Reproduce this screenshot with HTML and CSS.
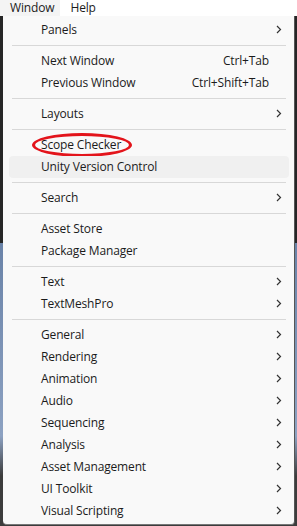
FILE: index.html
```html
<!DOCTYPE html>
<html lang="en">
<head>
    <meta charset="UTF-8">
    <meta name="viewport" content="width=device-width, initial-scale=1.0">
    <title>Window Menu</title>
    <link rel="stylesheet" href="styles.css">
</head>
<body>
    <div class="menubar">
        <span class="mb-item active">Window</span>
        <span class="mb-item">Help</span>
    </div>

    <div class="desk">
        <div class="menu">
            <div class="item"><span class="label">Panels</span><span class="arrow"><svg width="6" height="9" viewBox="0 0 6 9"><polyline points="1,1 4.5,4.5 1,8"/></svg></span></div>
            <div class="sep"></div>
            <div class="item"><span class="label">Next Window</span><span class="key">Ctrl+Tab</span><span class="arrow"></span></div>
            <div class="item"><span class="label">Previous Window</span><span class="key">Ctrl+Shift+Tab</span><span class="arrow"></span></div>
            <div class="sep"></div>
            <div class="item"><span class="label">Layouts</span><span class="arrow"><svg width="6" height="9" viewBox="0 0 6 9"><polyline points="1,1 4.5,4.5 1,8"/></svg></span></div>
            <div class="sep"></div>
            <div class="item"><span class="label">Scope Checker</span><span class="arrow"></span><span class="circled"></span></div>
            <div class="item hover"><span class="label">Unity Version Control</span><span class="arrow"></span></div>
            <div class="sep"></div>
            <div class="item"><span class="label">Search</span><span class="arrow"><svg width="6" height="9" viewBox="0 0 6 9"><polyline points="1,1 4.5,4.5 1,8"/></svg></span></div>
            <div class="sep"></div>
            <div class="item"><span class="label">Asset Store</span><span class="arrow"></span></div>
            <div class="item"><span class="label">Package Manager</span><span class="arrow"></span></div>
            <div class="sep"></div>
            <div class="item"><span class="label">Text</span><span class="arrow"><svg width="6" height="9" viewBox="0 0 6 9"><polyline points="1,1 4.5,4.5 1,8"/></svg></span></div>
            <div class="item"><span class="label">TextMeshPro</span><span class="arrow"><svg width="6" height="9" viewBox="0 0 6 9"><polyline points="1,1 4.5,4.5 1,8"/></svg></span></div>
            <div class="sep"></div>
            <div class="item"><span class="label">General</span><span class="arrow"><svg width="6" height="9" viewBox="0 0 6 9"><polyline points="1,1 4.5,4.5 1,8"/></svg></span></div>
            <div class="item"><span class="label">Rendering</span><span class="arrow"><svg width="6" height="9" viewBox="0 0 6 9"><polyline points="1,1 4.5,4.5 1,8"/></svg></span></div>
            <div class="item"><span class="label">Animation</span><span class="arrow"><svg width="6" height="9" viewBox="0 0 6 9"><polyline points="1,1 4.5,4.5 1,8"/></svg></span></div>
            <div class="item"><span class="label">Audio</span><span class="arrow"><svg width="6" height="9" viewBox="0 0 6 9"><polyline points="1,1 4.5,4.5 1,8"/></svg></span></div>
            <div class="item"><span class="label">Sequencing</span><span class="arrow"><svg width="6" height="9" viewBox="0 0 6 9"><polyline points="1,1 4.5,4.5 1,8"/></svg></span></div>
            <div class="item"><span class="label">Analysis</span><span class="arrow"><svg width="6" height="9" viewBox="0 0 6 9"><polyline points="1,1 4.5,4.5 1,8"/></svg></span></div>
            <div class="item"><span class="label">Asset Management</span><span class="arrow"><svg width="6" height="9" viewBox="0 0 6 9"><polyline points="1,1 4.5,4.5 1,8"/></svg></span></div>
            <div class="item"><span class="label">UI Toolkit</span><span class="arrow"><svg width="6" height="9" viewBox="0 0 6 9"><polyline points="1,1 4.5,4.5 1,8"/></svg></span></div>
            <div class="item"><span class="label">Visual Scripting</span><span class="arrow"><svg width="6" height="9" viewBox="0 0 6 9"><polyline points="1,1 4.5,4.5 1,8"/></svg></span></div>
        </div>
    </div>
</body>
</html>
```

FILE: styles.css
```css
body {
    margin: 0;
    font-family: "Open Sans", "Noto Sans", sans-serif;
    font-size: 12px;
    letter-spacing: -0.15px;
    color: #1b1b1b;
    background: #3a3a3a;
    height: 526px;
    overflow: hidden;
}
.menubar {
    height: 16px;
    background-color: #fff;
    display: flex;
}
.mb-item {
    padding: 0 4px 0 10px;
    height: 16px;
    line-height: 15px;
    font-size: 12px;
}
.mb-item.active {
    background-color: #f4f4f4;
    padding-right: 6px;
}
.desk {
    padding-left: 3px;
    background: linear-gradient(to bottom, #262626 0, #262626 227px, #6a83a8 227px, #8da2c2 420px, #3c3c3c 460px);
    height: 510px;
}
.menu {
    width: 292px;
    box-sizing: border-box;
    background-color: #f9f9f9;
    border-right: 1px solid #555;
    border-bottom: 1px solid #777;
    border-radius: 0 0 4px 4px;
    padding: 3px 0 2px;
}
.item {
    position: relative;
    display: flex;
    align-items: center;
    box-sizing: border-box;
    height: 22px;
    margin: 0 5px 0 6px;
    padding: 0 0 1px 32px;
    border-radius: 4px;
}
.item.hover {
    background-color: #f0f0f0;
}
.label {
    flex: 1;
}
.key {
    text-align: right;
}
.arrow {
    width: 20px;
    flex-shrink: 0;
    display: flex;
    align-items: center;
}
.arrow svg {
    margin-left: 7px;
    fill: none;
    stroke: #333;
    stroke-width: 1.2;
}
.sep {
    height: 1px;
    margin: 4px 8px 4px 9px;
    background-color: #d8d8d8;
}
.circled {
    position: absolute;
    left: 23px;
    top: -1px;
    width: 100px;
    height: 24px;
    box-sizing: border-box;
    border: 3px solid #e3141b;
    border-radius: 50%;
}
```
